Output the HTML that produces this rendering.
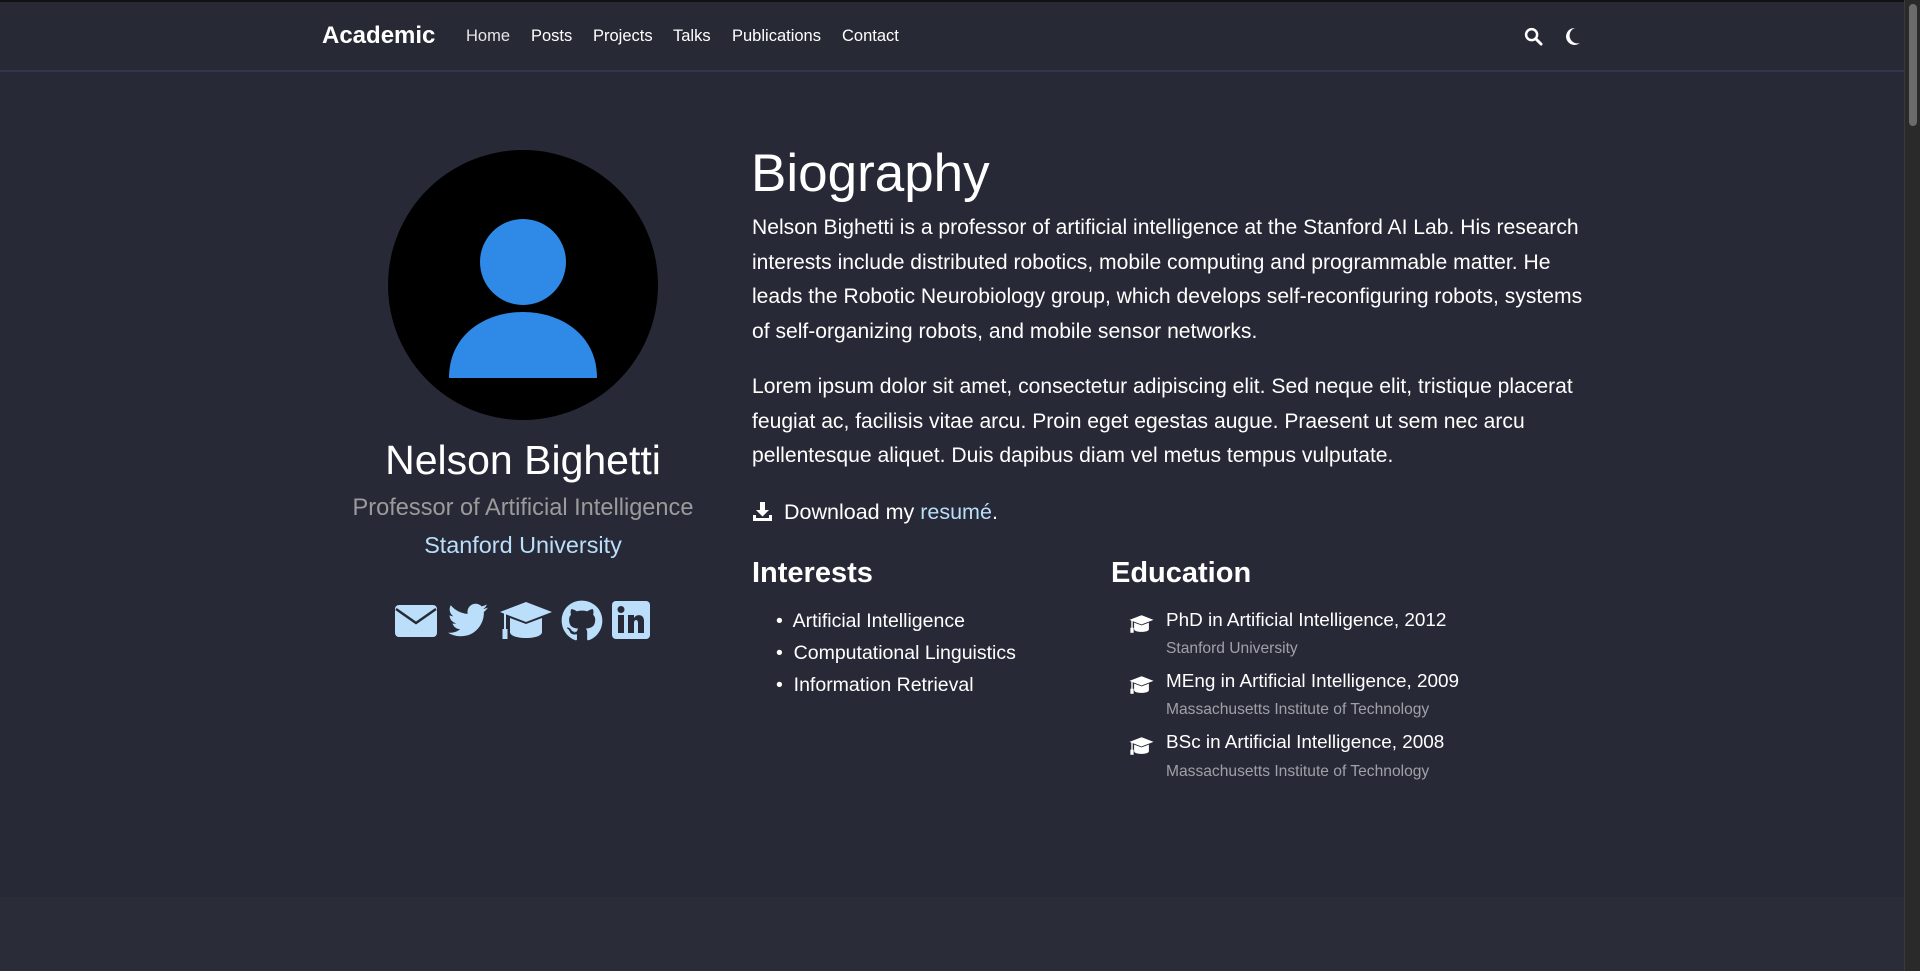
<!DOCTYPE html>
<html><head><meta charset="utf-8">
<style>
*{margin:0;padding:0;box-sizing:border-box}
html,body{width:1920px;height:971px;overflow:hidden;background:#272a36;font-family:"Liberation Sans",sans-serif;color:#eeeeee}
.nav{position:absolute;left:0;top:0;width:1904px;height:72px;background:#272935;border-bottom:2px solid #33354a;border-top:2px solid #111}
.logo{position:absolute;left:322px;top:20px;font-weight:bold;font-size:24px;color:#fff}
.nav a{position:absolute;top:25px;font-size:16.5px;color:#fff;text-decoration:none}
.foot{position:absolute;left:0;top:897px;width:1904px;height:74px;background:#2a2c38}
.sb{position:absolute;right:0;top:0;width:16px;height:971px;background:#2a2a2a;border-left:1px solid #3a3a3a}
.sb div{position:absolute;left:4px;top:4px;width:8px;height:122px;border-radius:4px;background:#6b6b6b}
.ab{position:absolute;white-space:nowrap}
p.t{position:absolute;left:752px;width:840px;font-size:21.1px;line-height:34.7px;color:#fff}
h3{position:absolute;font-size:29px;font-weight:bold;color:#fff}
.li{position:absolute;font-size:19.5px;color:#fff}
.ed{position:absolute;font-size:18.9px;color:#fff}
.sub{position:absolute;font-size:15.6px;color:#a0a0a8}
</style></head><body>
<div class="nav">
<div class="logo">Academic</div>
<a style="left:466px;color:#e6e6e6">Home</a><a style="left:531px">Posts</a><a style="left:593px">Projects</a><a style="left:673px">Talks</a><a style="left:732px">Publications</a><a style="left:842px">Contact</a>
<svg style="position:absolute;left:1524px;top:25px" width="19" height="19" viewBox="0 0 20 20"><circle cx="8" cy="8" r="5.8" fill="none" stroke="#fff" stroke-width="2.6"/><line x1="12.3" y1="12.3" x2="18" y2="18" stroke="#fff" stroke-width="3" stroke-linecap="round"/></svg>
<svg style="position:absolute;left:1565px;top:25px" width="16" height="19" viewBox="0 0 16 19"><path d="M10 1 A8.5 8.5 0 1 0 15 16 A7 7 0 0 1 10 1Z" fill="#fff"/></svg>
</div>
<div class="foot"></div>
<div class="sb"><div></div></div>

<svg style="position:absolute;left:388px;top:150px" width="270" height="270" viewBox="0 0 270 270">
<circle cx="135" cy="135" r="135" fill="#000"/>
<circle cx="135" cy="112" r="43" fill="#2e8ae6"/>
<path d="M61 228 C61 140 209 140 209 228 Z" fill="#2e8ae6"/>
</svg>
<div class="ab" style="left:323px;width:400px;text-align:center;top:437px;font-size:41px;color:#fff">Nelson Bighetti</div>
<div class="ab" style="left:323px;width:400px;text-align:center;top:495px;font-size:23.6px;color:#9b9b9b">Professor of Artificial Intelligence</div>
<div class="ab" style="left:323px;width:400px;text-align:center;top:532px;font-size:23.4px;color:#bbdefb">Stanford University</div>

<svg style="position:absolute;left:394px;top:600px" width="44" height="40" viewBox="0 0 44 40"><rect x="1" y="5" width="42" height="32" rx="4" fill="#bbdefb"/><path d="M2 9 L22 23 L42 9" fill="none" stroke="#272a36" stroke-width="2.5"/></svg>
<svg style="position:absolute;left:446px;top:600px" width="44" height="40" viewBox="0 0 512 512"><path fill="#bbdefb" d="M459 152c.3 4.5.3 9.1.3 13.6 0 138.7-105.6 298.6-298.6 298.6-59.5 0-114.7-17.2-161.1-47.1 8.4 1 16.6 1.3 25.3 1.3 49.1 0 94.2-16.6 130.3-44.8-46.1-1-84.8-31.200-98.1-72.8 6.5 1 13 1.6 19.8 1.6 9.4 0 18.8-1.3 27.6-3.6-48.1-9.7-84.1-52-84.1-103v-1.3c14 7.8 30.2 12.7 47.4 13.3-28.3-18.8-46.8-51-46.8-87.4 0-19.5 5.2-37.4 14.3-53 51.7 63.7 129.3 105.3 216.4 109.8-1.6-7.8-2.6-15.9-2.6-24 0-57.8 46.8-104.9 104.9-104.900 30.2 0 57.5 12.7 76.7 33.1 23.7-4.5 46.5-13.3 66.6-25.3-7.8 24.4-24.4 44.8-46.1 57.8 21.1-2.3 41.6-8.1 60.4-16.2-14.3 20.8-32.2 39.3-52.6 54.3z"/></svg>
<svg style="position:absolute;left:499px;top:600px" width="54" height="42" viewBox="0 0 54 42"><path d="M27 2 L53 12 L27 22 L1 12Z" fill="#bbdefb"/><path d="M11 18 L11 32 C11 40 43 40 43 32 L43 18 L27 24Z" fill="#bbdefb"/><rect x="5" y="13" width="2" height="18" fill="#bbdefb"/><rect x="3.5" y="29" width="5" height="10" fill="#bbdefb"/></svg>
<svg style="position:absolute;left:561px;top:600px" width="42" height="42" viewBox="0 0 496 512"><path fill="#bbdefb" d="M165.9 397.4c0 2-2.3 3.6-5.2 3.6-3.3.3-5.6-1.3-5.6-3.6 0-2 2.3-3.6 5.2-3.6 3-.3 5.6 1.3 5.6 3.6zM244.8 8C106.1 8 0 113.3 0 252c0 110.9 69.8 205.8 169.5 239.2 12.8 2.3 17.3-5.6 17.3-12.1 0-6.2-.3-40.4-.3-61.4 0 0-70 15-84.7-29.8 0 0-11.4-29.1-27.8-36.600 0 0-22.9-15.7 1.6-15.4 0 0 24.9 2 38.6 25.8 21.9 38.6 58.6 27.5 72.9 20.9 2.3-16 8.8-27.1 16-33.7-55.9-6.2-112.3-14.3-112.3-110.5 0-27.5 7.6-41.3 23.6-58.9-2.600-6.5-11.1-33.3 2.6-67.9 20.9-6.5 69 27 69 27 20-5.6 41.5-8.5 62.8-8.5s42.8 2.9 62.8 8.5c0 0 48.1-33.6 69-27 13.7 34.7 5.2 61.4 2.6 67.9 16 17.7 25.8 31.5 25.8 58.9 0 96.5-58.9 104.2-114.8 110.5 9.2 7.9 17 22.9 17 46.4 0 33.7-.3 75.4-.3 83.6 0 6.5 4.6 14.4 17.3 12.1C428.2 457.8 496 362.9 496 252 496 113.3 383.5 8 244.8 8z"/></svg>
<svg style="position:absolute;left:612px;top:600px" width="38" height="40" viewBox="0 0 38 40"><rect x="0" y="1" width="38" height="38" rx="4" fill="#bbdefb"/><rect x="6" y="15" width="6" height="18" fill="#272a36"/><circle cx="9" cy="9.5" r="3.5" fill="#272a36"/><path d="M16 15 H22 V18 C24 14 32 13.5 32 21 V33 H26 V23 C26 19 22 19 22 23 V33 H16Z" fill="#272a36"/></svg>

<div class="ab" style="left:751px;top:143px;font-size:53px;color:#fff">Biography</div>
<p class="t" style="top:211px">Nelson Bighetti is a professor of artificial intelligence at the Stanford AI Lab. His research interests include distributed robotics, mobile computing and programmable matter. He leads the Robotic Neurobiology group, which develops self-reconfiguring robots, systems of self-organizing robots, and mobile sensor networks.</p>
<p class="t" style="top:370px">Lorem ipsum dolor sit amet, consectetur adipiscing elit. Sed neque elit, tristique placerat feugiat ac, facilisis vitae arcu. Proin eget egestas augue. Praesent ut sem nec arcu pellentesque aliquet. Duis dapibus diam vel metus tempus vulputate.</p>
<svg style="position:absolute;left:752px;top:501px" width="21" height="21" viewBox="0 0 21 21"><path d="M8 1 H13 V9 H17 L10.5 15.5 L4 9 H8Z" fill="#fff"/><path d="M1 14 V20 H20 V14 H17 V17 H4 V14Z" fill="#fff"/></svg>
<div class="ab" style="left:784px;top:500px;font-size:21.5px;color:#fff">Download my <span style="color:#bbdefb">resumé</span>.</div>

<h3 style="left:752px;top:557px">Interests</h3>
<h3 style="left:1111px;top:557px">Education</h3>
<div class="li" style="left:776px;top:610px">•&nbsp; Artificial Intelligence</div>
<div class="li" style="left:776px;top:642px">•&nbsp; Computational Linguistics</div>
<div class="li" style="left:776px;top:674px">•&nbsp; Information Retrieval</div>

<svg style="position:absolute;left:1129px;top:614px" width="25" height="20" viewBox="0 0 54 42"><path d="M27 2 L53 12 L27 22 L1 12Z" fill="#fff"/><path d="M11 18 L11 32 C11 40 43 40 43 32 L43 18 L27 24Z" fill="#fff"/><rect x="5" y="13" width="3" height="18" fill="#fff"/><rect x="3" y="29" width="7" height="11" fill="#fff"/></svg>
<svg style="position:absolute;left:1129px;top:675px" width="25" height="20" viewBox="0 0 54 42"><path d="M27 2 L53 12 L27 22 L1 12Z" fill="#fff"/><path d="M11 18 L11 32 C11 40 43 40 43 32 L43 18 L27 24Z" fill="#fff"/><rect x="5" y="13" width="3" height="18" fill="#fff"/><rect x="3" y="29" width="7" height="11" fill="#fff"/></svg>
<svg style="position:absolute;left:1129px;top:736px" width="25" height="20" viewBox="0 0 54 42"><path d="M27 2 L53 12 L27 22 L1 12Z" fill="#fff"/><path d="M11 18 L11 32 C11 40 43 40 43 32 L43 18 L27 24Z" fill="#fff"/><rect x="5" y="13" width="3" height="18" fill="#fff"/><rect x="3" y="29" width="7" height="11" fill="#fff"/></svg>
<div class="ed" style="left:1166px;top:610px">PhD in Artificial Intelligence, 2012</div>
<div class="sub" style="left:1166px;top:640px">Stanford University</div>
<div class="ed" style="left:1166px;top:671px">MEng in Artificial Intelligence, 2009</div>
<div class="sub" style="left:1166px;top:701px">Massachusetts Institute of Technology</div>
<div class="ed" style="left:1166px;top:732px">BSc in Artificial Intelligence, 2008</div>
<div class="sub" style="left:1166px;top:763px">Massachusetts Institute of Technology</div>
</body></html>
